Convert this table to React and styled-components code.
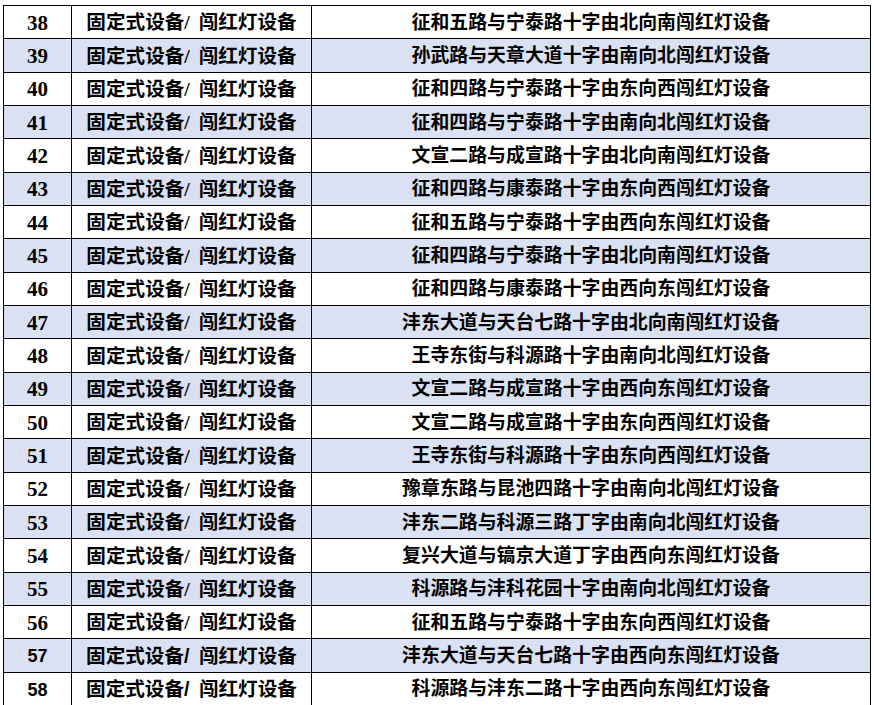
import React from 'react'
import styled, { createGlobalStyle } from 'styled-components'

const rows = [
  [38, '征和五路与宁泰路十字由北向南闯红灯设备'],
  [39, '孙武路与天章大道十字由南向北闯红灯设备'],
  [40, '征和四路与宁泰路十字由东向西闯红灯设备'],
  [41, '征和四路与宁泰路十字由南向北闯红灯设备'],
  [42, '文宣二路与成宣路十字由北向南闯红灯设备'],
  [43, '征和四路与康泰路十字由东向西闯红灯设备'],
  [44, '征和五路与宁泰路十字由西向东闯红灯设备'],
  [45, '征和四路与宁泰路十字由北向南闯红灯设备'],
  [46, '征和四路与康泰路十字由西向东闯红灯设备'],
  [47, '沣东大道与天台七路十字由北向南闯红灯设备'],
  [48, '王寺东街与科源路十字由南向北闯红灯设备'],
  [49, '文宣二路与成宣路十字由西向东闯红灯设备'],
  [50, '文宣二路与成宣路十字由东向西闯红灯设备'],
  [51, '王寺东街与科源路十字由东向西闯红灯设备'],
  [52, '豫章东路与昆池四路十字由南向北闯红灯设备'],
  [53, '沣东二路与科源三路丁字由南向北闯红灯设备'],
  [54, '复兴大道与镐京大道丁字由西向东闯红灯设备'],
  [55, '科源路与沣科花园十字由南向北闯红灯设备'],
  [56, '征和五路与宁泰路十字由东向西闯红灯设备'],
  [57, '沣东大道与天台七路十字由西向东闯红灯设备'],
  [58, '科源路与沣东二路十字由西向东闯红灯设备'],
]

const GlobalStyle = createGlobalStyle`
  html, body {
    margin: 0;
    padding: 0;
    background: #ffffff;
  }
`

const Page = styled.div`
  padding: 5px 0 0 3px;
  height: 705px;
  overflow: hidden;
  box-sizing: border-box;
`

const Table = styled.table`
  border-collapse: collapse;
  table-layout: fixed;
  width: 867px;
  color: #000;
`

const Col = styled.col`
  width: ${p => p.$w}px;
`

const Row = styled.tr`
  height: 33.33px;
  background: ${p => (p.$band ? '#d9e1f2' : '#ffffff')};
`

const Cell = styled.td`
  border: 1px solid #000;
  padding: 2px 0 0;
  text-align: center;
  vertical-align: middle;
  font-family: ${p => (p.$pasted ? '"Liberation Sans"' : '"Liberation Serif"')}, "Noto Sans CJK SC", serif;
  font-weight: 700;
  font-size: 18.9px;
  line-height: 1;
  white-space: pre;
  overflow: hidden;
`

const NumCell = styled(Cell)`
  font-size: ${p => (p.$pasted ? '18px' : '21px')};
`

const TypeCell = styled(Cell)`
  font-size: 19.6px;
  word-spacing: 4px;
`

export default function App() {
  return (
    <Page>
      <GlobalStyle />
      <Table>
        <colgroup>
          <Col $w={68} />
          <Col $w={240} />
          <Col $w={559} />
        </colgroup>
        <tbody>
          {rows.map(([n, place], i) => {
            const pasted = n >= 57
            return (
              <Row key={n} $band={i % 2 === 1}>
                <NumCell $pasted={pasted}>{n}</NumCell>
                <TypeCell $pasted={pasted}>固定式设备/ 闯红灯设备</TypeCell>
                <Cell $pasted={pasted}>{place}</Cell>
              </Row>
            )
          })}
        </tbody>
      </Table>
    </Page>
  )
}
